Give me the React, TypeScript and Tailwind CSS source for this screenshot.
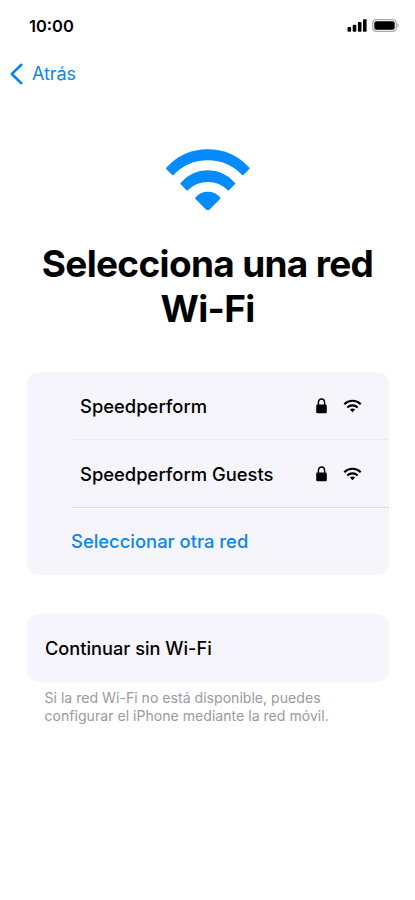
const networks = [
    { id: 1, name: "Speedperform", divider: "border-[#ebeaf0]" },
    { id: 2, name: "Speedperform Guests", divider: "border-[#dddce1]" },
];

function WifiIcon({ className }: { className: string }) {
    return (
        <svg className={className} viewBox="0 0 86 63" fill="currentColor" stroke="currentColor" strokeWidth="1.6" strokeLinejoin="round">
            <path d="M1.8 20.4A55 55 0 0 1 83.8 20.4L77.8 26.5A48 48 0 0 0 7.8 26.5Z" />
            <path d="M16.1 35.4A35 35 0 0 1 69.5 35.4L63.4 41.7A29 29 0 0 0 22.2 41.7Z" />
            <path d="M30.9 50.3A15.4 15.4 0 0 1 54.7 50.3L44.3 60.6Q42.8 62.2 41.3 60.6Z" />
        </svg>
    );
}

function SmallWifiIcon() {
    return (
        <svg className="mr-[27px] ml-[16px] h-[14px] w-[19px]" viewBox="0 0 19 14" fill="none" stroke="black" strokeWidth="2.1">
            <path d="M1.3 5.2A11.6 11.6 0 0 1 17.7 5.2" />
            <path d="M4.3 8.6A7.3 7.3 0 0 1 14.7 8.6" />
            <path d="M6.9 10.6A4 4 0 0 1 12.1 10.6L9.5 13.3Z" fill="black" stroke="none" />
        </svg>
    );
}

function LockIcon() {
    return (
        <svg className="h-[16px] w-[11px]" viewBox="0 0 11 16">
            <path d="M2.4 8V4.7C2.4 2.2 3.6 1 5.5 1S8.6 2.2 8.6 4.7V8" fill="none" stroke="black" strokeWidth="1.5" />
            <rect x="0.2" y="6.6" width="10.6" height="8.7" rx="1.3" />
        </svg>
    );
}

export default function App() {
    return (
        <div className="h-[900px] w-[415px] overflow-hidden bg-white font-['Inter',sans-serif] text-black">
            {/* Status bar */}
            <div className="flex h-[51px] items-center justify-between pr-[16px] pl-[29px]">
                <span className="text-[16.5px] leading-5 font-semibold">10:00</span>
                <div className="flex items-center gap-[5px]">
                    <svg className="h-[13px] w-[20px]" viewBox="0 0 20 13">
                        <rect x="0.5" y="8" width="3.6" height="4.7" rx="1" />
                        <rect x="5.7" y="5.7" width="3.6" height="7" rx="1" />
                        <rect x="10.9" y="3" width="3.6" height="9.7" rx="1" />
                        <rect x="16" y="0.3" width="3.6" height="12.4" rx="1" />
                    </svg>
                    <svg className="h-[13px] w-[27px]" viewBox="0 0 27 13">
                        <rect x="0.7" y="0.7" width="23.6" height="11.6" rx="3.6" fill="none" stroke="#a9a9a9" strokeWidth="1.3" />
                        <rect x="2.3" y="2.3" width="20.4" height="8.4" rx="2" />
                        <path d="M25.4 4.5C27.2 5.1 27.2 7.9 25.4 8.5Z" fill="#a9a9a9" />
                    </svg>
                </div>
            </div>

            {/* Navigation */}
            <button className="flex h-[44px] items-center gap-[9px] pt-px pl-[10px] text-[#0a86f0]">
                <svg className="h-[22px] w-[13px]" viewBox="0 0 13 22" fill="none" stroke="currentColor" strokeWidth="2.6" strokeLinecap="round" strokeLinejoin="round">
                    <path d="M11.3 1.8L1.8 11L11.3 20.2" />
                </svg>
                <span className="text-[18px] leading-6 tracking-[-0.1px]">Atrás</span>
            </button>

            <div className="flex flex-col items-center pt-[53px]">
                <WifiIcon className="h-[63px] w-[86px] text-[#038bff]" />
                <h1 className="mt-[30px] text-center text-[37px] leading-[45px] font-bold tracking-[-0.68px] whitespace-nowrap">
                    Selecciona una red
                    <br />
                    Wi-Fi
                </h1>
            </div>

            <div className="mt-[41px] ml-[27px] w-[362px] rounded-xl bg-[#f6f5fb] text-[18.4px] font-medium">
                {networks.map((network) => (
                    <div key={network.id} className={`ml-[44px] flex h-[68px] items-center border-b pl-[9px] ${network.divider}`}>
                        <span className="flex-1 pt-[2px] whitespace-nowrap">{network.name}</span>
                        <LockIcon />
                        <SmallWifiIcon />
                    </div>
                ))}
                <button className="ml-[44px] flex h-[67px] items-center whitespace-nowrap text-[#0a86f0]">Seleccionar otra red</button>
            </div>

            <button className="mt-[39px] ml-[27px] flex h-[68px] w-[362px] items-center rounded-xl bg-[#f6f5fb] pt-px pl-[18px] text-[18.2px] font-medium whitespace-nowrap">
                Continuar sin Wi-Fi
            </button>
            <p className="mt-[7px] ml-[44.5px] text-[14.1px] leading-[18px] whitespace-nowrap text-[#9b9a9f]">
                Si la red Wi-Fi no está disponible, puedes
                <br />
                configurar el iPhone mediante la red móvil.
            </p>
        </div>
    );
}
